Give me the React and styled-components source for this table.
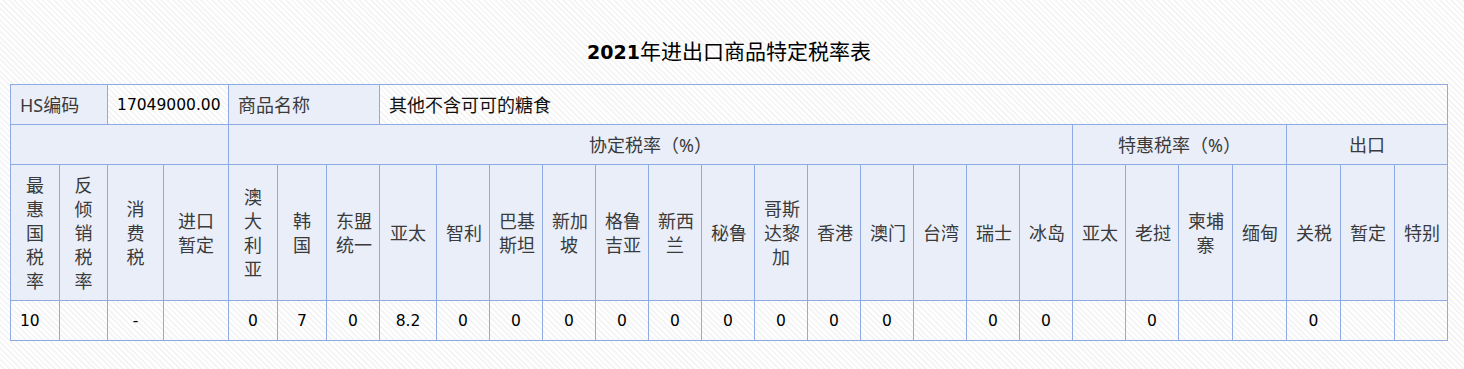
import React from 'react'
import styled, {createGlobalStyle, css} from 'styled-components'

const GlobalStyle = createGlobalStyle`
  html, body {
    margin: 0;
    padding: 0;
  }
  body {
    background: repeating-linear-gradient(45deg, #ffffff 0, #ffffff 2px, #f5f5f5 2px, #f5f5f5 4px);
    font-family: "Noto Sans", "Noto Sans CJK SC", sans-serif;
    min-height: 369px;
  }
`

const Page = styled.div`
  width: 1438px;
  padding: 0 10px;
`

const Title = styled.h1`
  margin: 0;
  height: 30px;
  padding: 36px 0 18px;
  text-align: center;
  font-size: 21px;
  line-height: 30px;
  font-weight: normal;
  color: #000;
`

const Year = styled.span`
  font-family: "DejaVu Sans", sans-serif;
  font-weight: bold;
  font-size: 19px;
`

const Table = styled.table`
  width: 1438px;
  table-layout: fixed;
  border-collapse: collapse;
  font-size: 18px;
  line-height: 24px;
`

const Row = styled.tr`
  height: ${props => props.tall ? '136px' : '40px'};
`

const Cell = styled.td`
  border: 1px solid #8eabe6;
  padding: 0 9px;
  color: #111;
  text-align: ${props => props.align || 'left'};
  vertical-align: middle;
  white-space: nowrap;
  ${props => props.head && css`
    background: #e9eef9;
    color: #3a3a3a;
  `}
  ${props => props.num && css`
    font-family: "DejaVu Sans", sans-serif;
    font-size: 15.5px;
    color: #000;
  `}
`

const Line = styled.span`
  display: block;
`

const widths = [49, 48, 56, 65, 49, 49, 53, 57, 53,
  53, 53, 53, 53, 53, 53, 53, 53, 53, 53, 53, 53, 53,
  54, 54, 54, 54]

const headers = [
  ['最', '惠', '国', '税', '率'],
  ['反', '倾', '销', '税', '率'],
  ['消', '费', '税'],
  ['进口', '暂定'],
  ['澳', '大', '利', '亚'],
  ['韩', '国'],
  ['东盟', '统一'],
  ['亚太'],
  ['智利'],
  ['巴基', '斯坦'],
  ['新加', '坡'],
  ['格鲁', '吉亚'],
  ['新西', '兰'],
  ['秘鲁'],
  ['哥斯', '达黎', '加'],
  ['香港'],
  ['澳门'],
  ['台湾'],
  ['瑞士'],
  ['冰岛'],
  ['亚太'],
  ['老挝'],
  ['柬埔', '寨'],
  ['缅甸'],
  ['关税'],
  ['暂定'],
  ['特别']
]

const values = ['10', '', '-', '', '0', '7', '0', '8.2', '0', '0', '0', '0', '0',
  '0', '0', '0', '0', '', '0', '0', '', '0', '', '', '0', '', '']

export default function App () {
  return <Page>
    <GlobalStyle />
    <Title><Year>2021</Year>年进出口商品特定税率表</Title>
    <Table>
      <colgroup>
        {widths.map((w, i) => <col key={i} style={{width: w}} />)}
      </colgroup>
      <tbody>
        <Row>
          <Cell head colSpan={2}>HS编码</Cell>
          <Cell num colSpan={2}>17049000.00</Cell>
          <Cell head colSpan={3}>商品名称</Cell>
          <Cell colSpan={20}>其他不含可可的糖食</Cell>
        </Row>
        <Row>
          <Cell head colSpan={4} />
          <Cell head colSpan={16} align='center'>协定税率（%）</Cell>
          <Cell head colSpan={4} align='center'>特惠税率（%）</Cell>
          <Cell head colSpan={3} align='center'>出口</Cell>
        </Row>
        <Row tall>
          {headers.map((lines, i) =>
            <Cell head key={i} align='center'>
              {lines.map((l, j) => <Line key={j}>{l}</Line>)}
            </Cell>
          )}
        </Row>
        <Row>
          {values.map((v, i) =>
            <Cell num key={i} align={i === 0 ? 'left' : 'center'}>{v}</Cell>
          )}
        </Row>
      </tbody>
    </Table>
  </Page>
}
